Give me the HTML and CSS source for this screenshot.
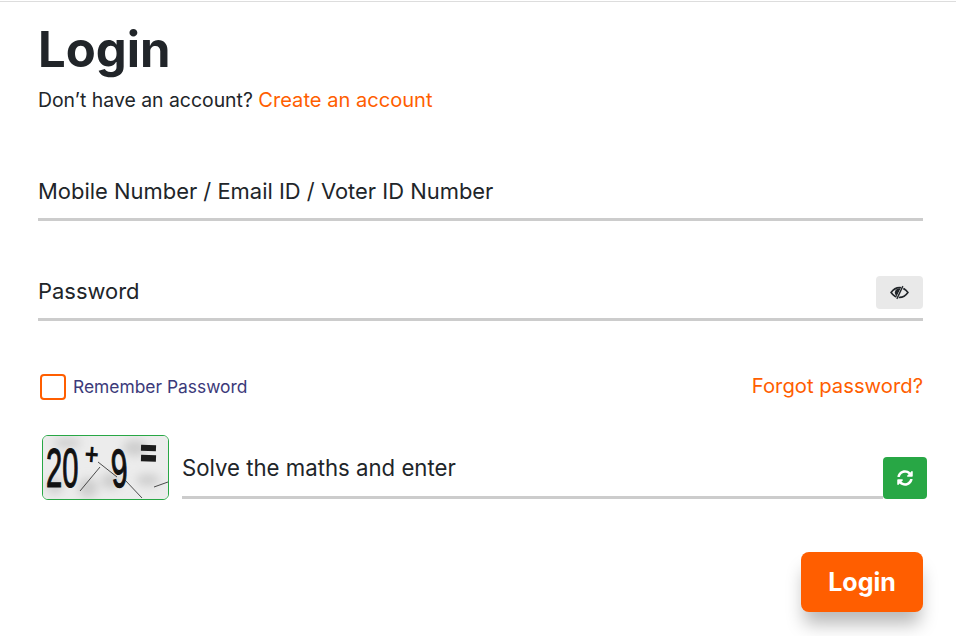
FILE: index.html
```html
<!DOCTYPE html>
<html lang="en">
<head>
<meta charset="utf-8">
<title>Login</title>
<link rel="stylesheet" href="styles.css">
</head>
<body>
<div class="topline"></div>
<main class="login">
  <h1 class="title">Login</h1>
  <p class="signup">Don’t have an account? <a class="link" href="#">Create an account</a></p>
  <form class="form">
    <div class="field field-user"><span class="label">Mobile Number / Email ID / Voter ID Number</span></div>
    <div class="field field-pass">
      <span class="label">Password</span>
      <button type="button" class="eye" aria-label="Show password">
        <svg viewBox="0 0 20 16" width="19" height="15">
          <path d="M1 8C3.500 4.500 6.500 2.800 10 2.800S16.500 4.500 19 8c-2.500 3.500-5.500 5.200-9 5.200S3.500 11.500 1 8Z" fill="none" stroke="#212529" stroke-width="1.700"/>
          <path d="M10.500 3.500C7 3.600 5 5.800 5 8c0 1.600.8 3 2.200 3.900L11.500 3.500Z" fill="#212529"/>
          <path d="M14 1 7 15" stroke="#e9e9e9" stroke-width="2.600"/>
          <path d="M13.600 1.200 7.200 14.800" stroke="#212529" stroke-width="1.400"/>
        </svg>
      </button>
    </div>
    <div class="options">
      <label class="remember"><span class="check"></span><span class="remember-text">Remember Password</span></label>
      <a class="link forgot" href="#">Forgot password?</a>
    </div>
    <div class="captcha-row">
      <div class="captcha">
        <svg viewBox="0 0 125 63" width="125" height="63">
          <defs><filter id="blur"><feGaussianBlur stdDeviation="5"/></filter></defs>
          <rect width="125" height="63" fill="#ececec"/>
          <g filter="url(#blur)" fill="#cdcdcd">
            <ellipse cx="24" cy="7" rx="14" ry="5"/>
            <ellipse cx="45" cy="52" rx="10" ry="10"/>
            <ellipse cx="68" cy="45" rx="10" ry="8"/>
            <ellipse cx="92" cy="12" rx="12" ry="8"/>
            <ellipse cx="105" cy="44" rx="12" ry="6"/>
            <ellipse cx="12" cy="50" rx="8" ry="8"/>
          </g>
          <text class="cap" transform="translate(3 51) scale(.52 1)">20</text>
          <text class="cap cap-nine" transform="translate(69 51.500) rotate(-3) scale(.55 1)">9</text>
          <text class="cap-plus" transform="translate(41 28) rotate(4) scale(1 1.250)">+</text>
          <rect x="98" y="9" width="15" height="6" fill="#1c1c1c" transform="rotate(2 105 12)"/>
          <rect x="98" y="19" width="15" height="6.500" fill="#1c1c1c" transform="rotate(2 105 22)"/>
          <path d="M37 55 57 31M55 26 74 41M82 44 99 62M111 51l14-5" stroke="#222" stroke-width=".8" fill="none"/>
        </svg>
      </div>
      <div class="captcha-field"><span class="label">Solve the maths and enter</span></div>
      <button type="button" class="refresh" aria-label="Refresh captcha">
        <svg viewBox="0 0 512 512" width="16" height="16"><path fill="#fff" d="M370.720 133.280C339.458 104.008 298.888 87.962 255.848 88c-77.458.068-144.328 53.178-162.791 126.850-1.344 5.363-6.122 9.150-11.651 9.150H24.103c-7.498 0-13.194-6.807-11.807-14.176C33.933 94.924 134.813 8 256 8c66.448 0 126.791 26.136 171.315 68.685L463.030 40.970C478.149 25.851 504 36.559 504 57.941V192c0 13.255-10.745 24-24 24H345.941c-21.382 0-32.090-25.851-16.971-40.971l41.750-41.749zM32 296h134.059c21.382 0 32.090 25.851 16.971 40.971l-41.750 41.750c31.262 29.273 71.835 45.319 114.876 45.280 77.418-.070 144.315-53.144 162.787-126.849 1.344-5.363 6.122-9.150 11.651-9.150h57.304c7.498 0 13.194 6.807 11.807 14.176C478.067 417.076 377.187 504 256 504c-66.448 0-126.791-26.136-171.315-68.685L48.970 471.030C33.851 486.149 8 475.441 8 454.059V320c0-13.255 10.745-24 24-24z"/></svg>
      </button>
    </div>
    <div class="actions"><button type="button" class="submit">Login</button></div>
  </form>
</main>
</body>
</html>
```
FILE: styles.css
```css
* { box-sizing: border-box; }
html, body { margin: 0; height: 100%; overflow: hidden; }
body { background: #fff; color: #212529; font-family: Inter, "Liberation Sans", sans-serif; }
.topline { height: 2px; border-bottom: 1px solid #ddd; }
.login { padding: 0 33px 0 38px; }
.title { margin: 0; padding-top: 19px; font-size: 49px; line-height: 58px; font-weight: 700; }
.signup { margin: 0; padding-top: 8px; font-size: 19.400px; line-height: 27px; }
.link { color: #ff5e00; text-decoration: none; }
.signup .link { font-size: 20.100px; }
.form { display: block; }
.field { display: flex; align-items: center; justify-content: space-between; border-bottom: 3px solid #ccc; height: 60px; font-size: 21.950px; }
.field-user { margin-top: 47px; padding-top: 3px; }
.field-pass { margin-top: 40px; padding-top: 2px; }
.label { line-height: 30px; }
.eye { width: 47px; height: 33px; border: 0; padding: 0; border-radius: 4px; background: #e9e9e9; display: flex; align-items: center; justify-content: center; position: relative; top: 2px; }
.options { display: flex; align-items: center; justify-content: space-between; margin-top: 52px; height: 28px; }
.remember { display: flex; align-items: center; margin-left: 2px; }
.check { width: 26px; height: 26px; border: 2px solid #ff5e00; border-radius: 4px; background: #fff; }
.remember-text { margin-left: 7px; font-size: 17.400px; line-height: 24px; color: #3c3a7a; }
.forgot { font-size: 20.250px; line-height: 26px; padding-bottom: 2px; }
.captcha-row { display: flex; align-items: flex-end; margin: 34px -4px 0 4px; }
.captcha { width: 127px; height: 65px; border: 1px solid #28a745; border-radius: 6px; overflow: hidden; flex: none; }
.captcha svg { display: block; }
.cap { font-family: "Liberation Sans", sans-serif; font-size: 56px; fill: #111; stroke: #111; stroke-width: 1.200px; }
.cap-nine { font-size: 54px; }
.cap-plus { font-family: "Liberation Sans", sans-serif; font-size: 24px; font-weight: 700; fill: #111; }
.captcha-field { flex: 1; margin-left: 13px; height: 62px; padding-top: 2px; display: flex; align-items: center; border-bottom: 3px solid #ccc; font-size: 22.200px; margin-bottom: 1px; }
.refresh { width: 44px; height: 42px; flex: none; border: 0; padding: 0; border-radius: 4px; background: #28a745; display: flex; align-items: center; justify-content: center; margin-bottom: 1px; }
.actions { display: flex; justify-content: flex-end; margin-top: 52px; }
.submit { width: 122px; height: 60px; border: 0; border-radius: 8px; background: #ff5e00; color: #fff; font: 700 25px Inter, "Liberation Sans", sans-serif; box-shadow: 0 15px 18px -3px rgba(0, 0, 0, .28); }
```
